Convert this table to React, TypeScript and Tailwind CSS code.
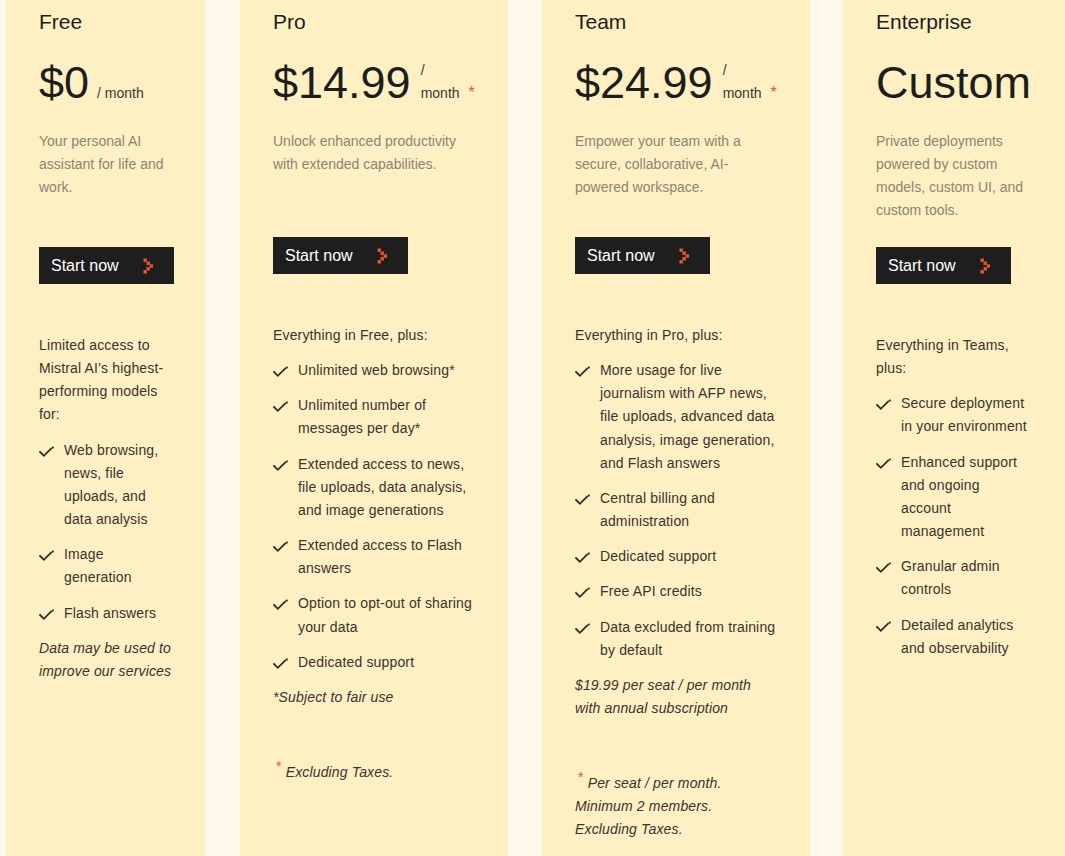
import React from "react";

type Plan = {
  name: string;
  price: string;
  unitWrap: boolean;
  star: boolean;
  desc: string[];
  descH: string;
  intro: string[];
  items: string[][];
  note?: string[];
  foot?: string[];
  width: string;
  ml: string;
};

const plans: Plan[] = [
  {
    name: "Free",
    price: "$0",
    unitWrap: false,
    star: false,
    desc: ["Your personal AI", "assistant for life and", "work."],
    descH: "h-[117px]",
    intro: ["Limited access to", "Mistral AI\u2019s highest-", "performing models", "for:"],
    items: [
      ["Web browsing,", "news, file", "uploads, and", "data analysis"],
      ["Image", "generation"],
      ["Flash answers"],
    ],
    note: ["Data may be used to", "improve our services"],
    width: "w-[199px]",
    ml: "ml-[6px]",
  },
  {
    name: "Pro",
    price: "$14.99",
    unitWrap: true,
    star: true,
    desc: ["Unlock enhanced productivity", "with extended capabilities."],
    descH: "h-[107px]",
    intro: ["Everything in Free, plus:"],
    items: [
      ["Unlimited web browsing*"],
      ["Unlimited number of", "messages per day*"],
      ["Extended access to news,", "file uploads, data analysis,", "and image generations"],
      ["Extended access to Flash", "answers"],
      ["Option to opt-out of sharing", "your data"],
      ["Dedicated support"],
    ],
    note: ["*Subject to fair use"],
    foot: ["Excluding Taxes."],
    width: "w-[268px]",
    ml: "ml-[35px]",
  },
  {
    name: "Team",
    price: "$24.99",
    unitWrap: true,
    star: true,
    desc: ["Empower your team with a", "secure, collaborative, AI-", "powered workspace."],
    descH: "h-[107px]",
    intro: ["Everything in Pro, plus:"],
    items: [
      [
        "More usage for live",
        "journalism with AFP news,",
        "file uploads, advanced data",
        "analysis, image generation,",
        "and Flash answers",
      ],
      ["Central billing and", "administration"],
      ["Dedicated support"],
      ["Free API credits"],
      ["Data excluded from training", "by default"],
    ],
    note: ["$19.99 per seat / per month", "with annual subscription"],
    foot: ["Per seat / per month.", "Minimum 2 members.", "Excluding Taxes."],
    width: "w-[268px]",
    ml: "ml-[34px]",
  },
  {
    name: "Enterprise",
    price: "Custom",
    unitWrap: false,
    star: false,
    desc: ["Private deployments", "powered by custom", "models, custom UI, and", "custom tools."],
    descH: "h-[117px]",
    intro: ["Everything in Teams,", "plus:"],
    items: [
      ["Secure deployment", "in your environment"],
      ["Enhanced support", "and ongoing", "account", "management"],
      ["Granular admin", "controls"],
      ["Detailed analytics", "and observability"],
    ],
    width: "w-[222px]",
    ml: "ml-[33px]",
  },
];

function Lines({ lines }: { lines: string[] }) {
  return (
    <>
      {lines.map((l, i) => (
        <React.Fragment key={i}>
          {i > 0 && <br />}
          {l}
        </React.Fragment>
      ))}
    </>
  );
}

function Check() {
  return (
    <svg width="16" height="12" viewBox="0 0 16 12" className="mt-[7px] shrink-0">
      <path
        d="M1 6 L4.8 9.8 L12.2 2.4"
        fill="none"
        stroke="#2d2a24"
        strokeWidth="1.8"
        strokeLinecap="square"
      />
      <rect x="13" y="0.6" width="1.8" height="1.8" fill="#2d2a24" />
    </svg>
  );
}

function Chevron() {
  return (
    <svg width="11" height="16" viewBox="0 0 11 16" className="shrink-0">
      <g fill="#e2572c">
        <rect x="0.5" y="0.5" width="3.5" height="3.5" />
        <rect x="3.5" y="3.5" width="3.5" height="3.5" />
        <rect x="6.5" y="6.3" width="3.5" height="3.5" />
        <rect x="3.5" y="9" width="3.5" height="3.5" />
        <rect x="0.5" y="12" width="3.5" height="3.5" />
      </g>
      <g fill="#a83a1c">
        <rect x="2.8" y="2.8" width="1.2" height="1.2" />
        <rect x="5.8" y="5.8" width="1.2" height="1.2" />
        <rect x="5.8" y="9" width="1.2" height="1.2" />
        <rect x="2.8" y="12" width="1.2" height="1.2" />
      </g>
    </svg>
  );
}

function Card({ p }: { p: Plan }) {
  return (
    <div className={`${p.width} ${p.ml} flex h-full shrink-0 flex-col bg-[#fff0c3] px-[33px] pt-[8px]`}>
      <div className="whitespace-nowrap text-[21px] leading-[28px] text-[#1d1d1b]">{p.name}</div>
      <div className="mt-[21px] h-[52px] whitespace-nowrap text-[45px] leading-[52px] text-[#1d1d1b]">
        {p.price}
        {p.price !== "Custom" &&
          (p.unitWrap ? (
            <span className="ml-[10px] inline-block text-[14px] leading-[23.15px] text-[#3a3833]">
              /
              <br />
              month
            </span>
          ) : (
            <span className="ml-[8px] text-[14px] leading-[23.15px] text-[#3a3833]">/ month</span>
          ))}
        {p.star && <span className="ml-[9px] text-[16px] leading-[23px] text-[#e2572c]">*</span>}
      </div>
      <div
        className={`${p.descH} mt-[21px] whitespace-nowrap text-[14px] leading-[23.15px] text-[#8a8574]`}
      >
        <Lines lines={p.desc} />
      </div>
      <div className="flex h-[37px] w-[135px] items-center bg-[#1e1e1e] pl-[12px]">
        <span className="whitespace-nowrap text-[16px] leading-[20px] text-white">Start now</span>
        <span className="ml-[24px] flex items-center">
          <Chevron />
        </span>
      </div>
      <div className="mt-[50px] flex flex-col gap-[12px] whitespace-nowrap text-[14px] leading-[23.15px] tracking-[0.15px] text-[#37342f]">
        <div>
          <Lines lines={p.intro} />
        </div>
        {p.items.map((it, i) => (
          <div key={i} className="flex gap-[9px]">
            <Check />
            <div>
              <Lines lines={it} />
            </div>
          </div>
        ))}
        {p.note && (
          <div className="italic">
            <Lines lines={p.note} />
          </div>
        )}
        {p.foot && (
          <div className="mt-[38px] italic">
            <span className="ml-[3px] align-super text-[14px] leading-none not-italic text-[#e2572c]">*</span>{" "}
            <Lines lines={p.foot} />
          </div>
        )}
      </div>
    </div>
  );
}

export default function App() {
  return (
    <div className="flex h-[856px] w-[1065px] overflow-hidden bg-[#fff9ec] font-['Liberation_Sans',Arial,sans-serif]">
      {plans.map((p) => (
        <Card key={p.name} p={p} />
      ))}
    </div>
  );
}
